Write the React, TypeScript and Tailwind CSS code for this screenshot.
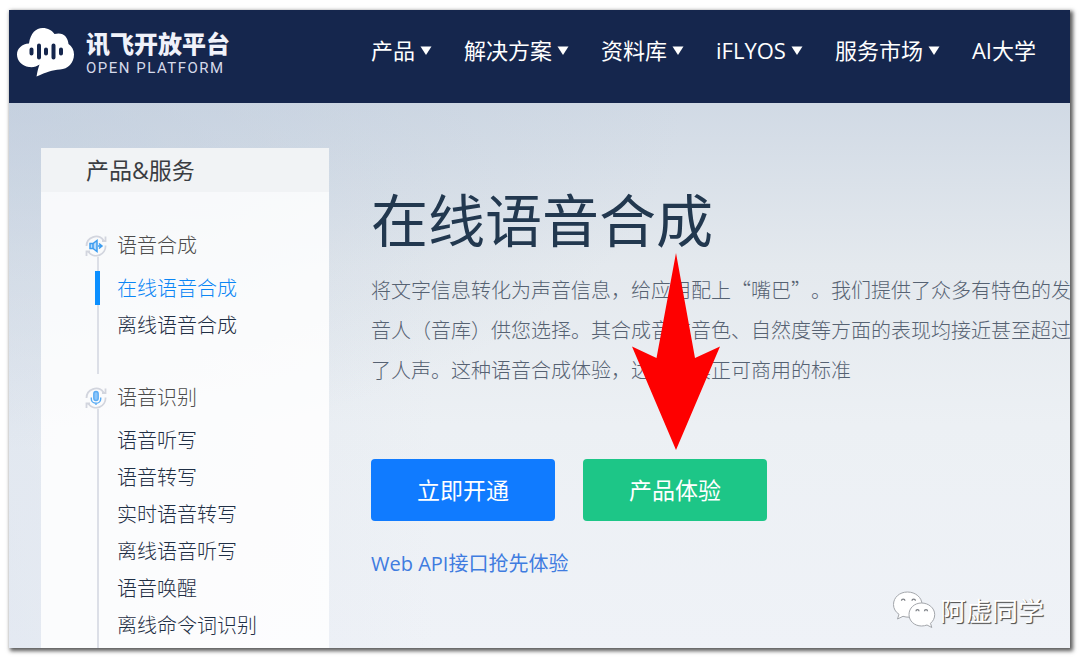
import React from "react";

const sans = "font-['Open_Sans','Noto_Sans_CJK_SC',sans-serif]";
const cjk = "font-['Noto_Sans_CJK_SC',sans-serif]";

const menus = [
  { label: "产品", dropdown: true },
  { label: "解决方案", dropdown: true },
  { label: "资料库", dropdown: true },
  { label: "iFLYOS", dropdown: true },
  { label: "服务市场", dropdown: true },
  { label: "AI大学", dropdown: false },
];

const groups = [
  {
    title: "语音合成",
    icon: "speaker",
    items: ["在线语音合成", "离线语音合成"],
  },
  {
    title: "语音识别",
    icon: "mic",
    items: ["语音听写", "语音转写", "实时语音转写", "离线语音听写", "语音唤醒", "离线命令词识别"],
  },
];

const activeItem = "在线语音合成";

function CloudLogo() {
  return (
    <svg viewBox="0 0 57 49" className="h-[49px] w-[57px] shrink-0" aria-hidden="true">
      <path
        fill="#fff"
        d="M12 15.500C13.500 5 19 0 25.500 0C31 0 35 2.500 37.500 6C46 3.500 51 9 51.500 16C55 18.500 57 22 57 26.500C57 35 51 41 43 41.500C35 42 30 44 19.500 48.500C20.300 45 20.500 42 22.500 36.500C20 38.500 16 39.500 12 39C5 38 0 33 0 26.500C0 20.500 5 16 12 15.500Z"
      />
      <path
        stroke="#15264d"
        strokeWidth="4"
        strokeLinecap="round"
        d="M14.500 21.500V25.500M22 17.500V29.500M29 21.500V25.500M36.500 17.500V29.500M44 21.500V25.500"
      />
    </svg>
  );
}

function GroupIcon({ kind }: { kind: string }) {
  return (
    <svg viewBox="0 0 22 22" className="h-[22px] w-[22px] shrink-0" fill="none" aria-hidden="true">
      <path
        d="M1.500 11A9.500 9.500 0 0 1 18.500 5.200M20.500 10.500A9.500 9.500 0 0 1 3.500 17M20.500 1.500V6H17M1.500 21V16.500H5"
        stroke="#d2d5de"
        strokeWidth="1.800"
      />
      {kind === "speaker" ? (
        <g stroke="#3d9df0" strokeWidth="1.500" fill="#b9dcfb">
          <path d="M5 8.500H8L12 5.500V16.500L8 13.500H5Z" />
          <path d="M14 8.500L17 11L14 13.500M13 11H17" />
          <path d="M8 8.500V13.500" />
        </g>
      ) : (
        <g stroke="#5aacf4" strokeWidth="1.400">
          <rect x="8.800" y="4.500" width="4.400" height="9" rx="2.200" fill="#8cc6fa" />
          <path d="M6.300 10.500V12A4.700 4.300 0 0 0 15.700 12V10.500M11 16.300V18" />
        </g>
      )}
    </svg>
  );
}

function Header() {
  return (
    <header className="flex h-[93px] items-center bg-[#15264d] pl-2 text-white">
      <a href="#" className="flex w-[354px] shrink-0 items-center gap-3 pb-2">
        <CloudLogo />
        <span className="flex flex-col">
          <span className={`${cjk} text-[24px] leading-[30px] font-black whitespace-nowrap text-[#f0f2fa]`}>讯飞开放平台</span>
          <span className="font-['Roboto',sans-serif] text-[15px] leading-5 tracking-widest whitespace-nowrap text-[#d5daea]">
            OPEN PLATFORM
          </span>
        </span>
      </a>
      <nav className="flex items-center gap-8 pb-3.5 text-[22px] leading-8 whitespace-nowrap">
        {menus.map((m) =>
          m.dropdown ? (
            <button key={m.label} type="button" className="flex items-center gap-[5px]">
              {m.label}
              <svg viewBox="0 0 12 9" className="mt-0.5 h-[9px] w-3" aria-hidden="true">
                <path d="M0.500 0.500H11.500L6 9Z" fill="#fff" />
              </svg>
            </button>
          ) : (
            <a key={m.label} href="#">
              {m.label}
            </a>
          )
        )}
      </nav>
    </header>
  );
}

function Sidebar() {
  return (
    <aside className="w-72 shrink-0 bg-white/85">
      <h2 className="h-11 bg-[#f1f3f5] pl-[45px] text-[23px] leading-[44px] text-[#3a3d42]">产品&amp;服务</h2>
      <div className="pt-[30px] pb-1 pl-11">
        {groups.map((g, i) => (
          <section key={g.title} className="flex gap-2.5">
            <div className="flex flex-col items-center pt-[13px]">
              <GroupIcon kind={g.icon} />
              <span className={`ml-1 w-0.5 grow bg-[#dcdfe7] ${i === 1 ? "-mb-1" : ""}`} />
            </div>
            <div className={`grow text-[20px] ${i === 0 ? "pb-[30px]" : ""}`}>
              <h3 className="leading-[48px] font-light text-[#4c4c4c]">{g.title}</h3>
              <ul>
                {g.items.map((item) => (
                  <li key={item} className="relative h-[37px] leading-[37px]">
                    {item === activeItem && <span className="absolute top-px -left-[22px] h-[34px] w-[5px] bg-[#0b8fff]" />}
                    <a href="#" className={item === activeItem ? "font-light text-[#0b86f5]" : "font-light text-[#1f2f45]"}>
                      {item}
                    </a>
                  </li>
                ))}
              </ul>
            </div>
          </section>
        ))}
      </div>
    </aside>
  );
}

function Hero() {
  return (
    <main className="relative min-w-0 grow">
      <h1 className="pt-9 text-[57px] leading-[72px] whitespace-nowrap text-[#22384f]">在线语音合成</h1>
      <p className={`${cjk} mt-3.5 text-[20px] leading-10 font-light whitespace-nowrap text-[#566272] [text-spacing-trim:space-all]`}>
        将文字信息转化为声音信息，给应用配上“嘴巴”。我们提供了众多有特色的发
        <br />
        音人（音库）供您选择。其合成音在音色、自然度等方面的表现均接近甚至超过
        <br />
        了人声。这种语音合成体验，达到了真正可商用的标准
      </p>
      <div className="mt-[69px] flex gap-7 text-[23px] text-white">
        <button type="button" className="h-[62px] w-[184px] rounded-[4px] bg-[#107bff]">
          立即开通
        </button>
        <button type="button" className="h-[62px] w-[184px] rounded-[4px] bg-[#1dc687]">
          产品体验
        </button>
      </div>
      <a href="#" className="mt-[27px] inline-block text-[20px] leading-8 text-[#3f7ce0]">
        Web API接口抢先体验
      </a>
      <svg viewBox="0 0 88 197" className="absolute top-[105px] left-[261px] h-[197px] w-[88px]" aria-hidden="true">
        <path d="M44 0L63 105L88 93.500L44 197L0 93.500L24.500 105Z" fill="#fe0000" />
      </svg>
    </main>
  );
}

function Watermark() {
  return (
    <div className="absolute right-[26px] bottom-[19px] flex items-center gap-1">
      <svg viewBox="0 0 44 38" className="h-[38px] w-11" fill="#fff" stroke="#a3a6ab" strokeWidth="1" aria-hidden="true">
        <path d="M15.500 1C7.500 1 1.500 6.500 1.500 13.500C1.500 17.500 3.500 21 7 23.300L5.500 28L11 25.300C13 26 15 26.200 17 26.200C24.500 26 30 20.500 30 13.500C30 6.500 23.500 1 15.500 1Z" />
        <path d="M29.500 12C22.500 12 17 17 17 23.500C17 30 22.500 35 29.500 35C31.500 35 33.500 34.600 35 34L39.800 36.500L38.500 32.300C41.300 30 42.700 27 42.700 23.500C42.700 17 36.500 12 29.500 12Z" />
        <g fill="none" stroke="#7d8086" strokeWidth="1.300">
          <path d="M9.500 9.800a1.700 1.700 0 0 1 3.400 0M20 9.800a1.700 1.700 0 0 1 3.400 0M24 20.200a1.500 1.500 0 0 1 3 0M32.500 20.200a1.500 1.500 0 0 1 3 0" />
        </g>
      </svg>
      <span className={`${cjk} text-[26px] leading-[38px] text-white [text-shadow:1px_1px_1px_#555,1px_1px_0_#888]`}>阿虚同学</span>
    </div>
  );
}

export default function App() {
  return (
    <div className={`${sans} bg-white pt-[10px] pr-[10px] pb-[11px] pl-[9px]`}>
      <div className="relative overflow-hidden bg-[radial-gradient(ellipse_at_0%_15%,#b9c7d880,transparent_45%),linear-gradient(to_right,#d3dcea66,transparent_40%),linear-gradient(to_bottom,#d1dae5_15%,#e4e9ee_40%,#ecf0f4_65%,#eff2f7)] shadow-[2px_2px_4px_1px_rgba(0,0,0,0.65)]">
        <Header />
        <div className="flex gap-[42px] pt-[45px] pl-8">
          <Sidebar />
          <Hero />
        </div>
        <Watermark />
      </div>
    </div>
  );
}
